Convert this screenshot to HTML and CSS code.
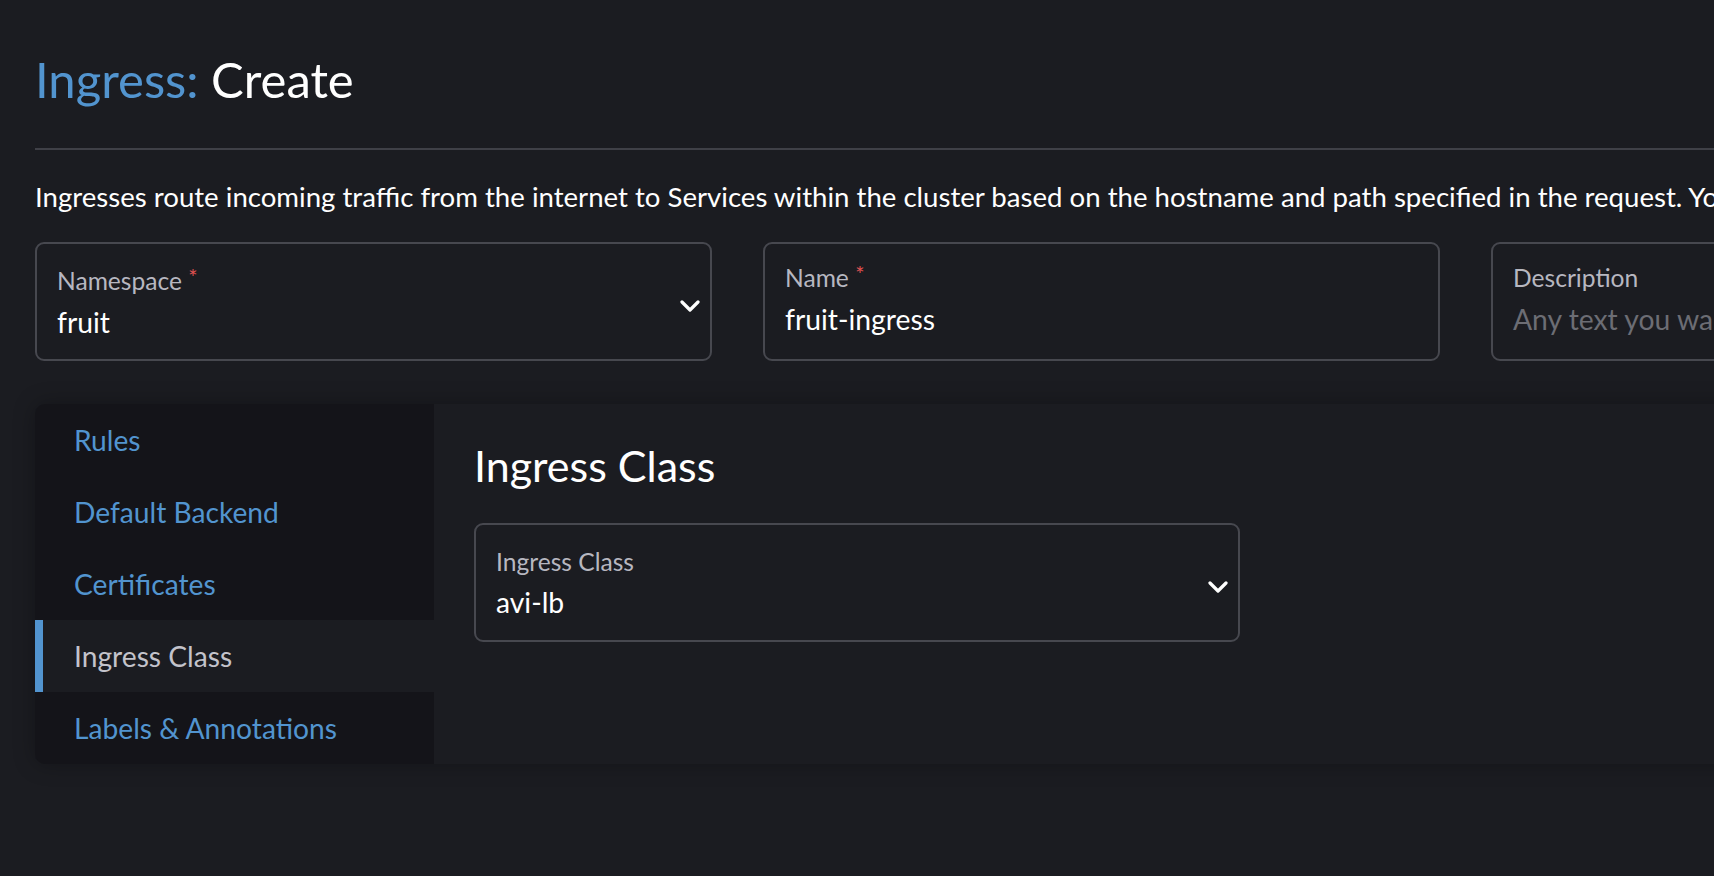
FILE: index.html
```html
<!DOCTYPE html>
<html lang="en">
<head>
<meta charset="utf-8">
<title>Ingress: Create</title>
<link rel="stylesheet" href="styles.css">
</head>
<body>
<div class="page">
  <header class="masthead">
    <h1 class="title"><span class="crumb">Ingress:</span> Create</h1>
  </header>
  <p class="intro">Ingresses route incoming traffic from the internet to Services within the cluster based on the hostname and path specified in the request. You can set up rules for host and path routing.</p>

  <div class="name-row">
    <div class="field field-select">
      <div class="field-text">
        <label class="field-label">Namespace <span class="req">*</span></label>
        <div class="field-value">fruit</div>
      </div>
      <svg class="chev" viewBox="0 0 20 12" aria-hidden="true"><path d="M2 2 L10 10 L18 2" fill="none" stroke="#ffffff" stroke-width="3.2" stroke-linecap="round" stroke-linejoin="round"/></svg>
    </div>
    <div class="field">
      <div class="field-text">
        <label class="field-label">Name <span class="req">*</span></label>
        <div class="field-value">fruit-ingress</div>
      </div>
    </div>
    <div class="field">
      <div class="field-text">
        <label class="field-label">Description</label>
        <div class="field-value placeholder">Any text you want that describes this resource</div>
      </div>
    </div>
  </div>

  <div class="tabbed">
    <ul class="tabs">
      <li class="tab">Rules</li>
      <li class="tab">Default Backend</li>
      <li class="tab">Certificates</li>
      <li class="tab active">Ingress Class</li>
      <li class="tab">Labels &amp; Annotations</li>
    </ul>
    <section class="tab-body">
      <h2 class="section-title">Ingress Class</h2>
      <div class="field field-select wide">
        <div class="field-text">
          <label class="field-label">Ingress Class</label>
          <div class="field-value">avi-lb</div>
        </div>
        <svg class="chev" viewBox="0 0 20 12" aria-hidden="true"><path d="M2 2 L10 10 L18 2" fill="none" stroke="#ffffff" stroke-width="3.2" stroke-linecap="round" stroke-linejoin="round"/></svg>
      </div>
    </section>
  </div>
</div>
</body>
</html>
```

FILE: styles.css
```css
html, body {
  margin: 0;
  padding: 0;
  background: #1b1c21;
  overflow: hidden;
}

body {
  font-family: Lato, "Open Sans", "Liberation Sans", sans-serif;
  color: #ffffff;
  width: 1714px;
  height: 876px;
}

.page {
  width: 2400px;
  padding: 50px 0 0 35px;
  box-sizing: border-box;
}

.masthead {
  width: 2200px;
  border-bottom: 2px solid #3f4047;
  padding-bottom: 39px;
}

.title {
  margin: 0;
  font-size: 49px;
  font-weight: 400;
  line-height: 1.2;
  color: #ffffff;
}

.crumb {
  color: #5294cf;
}

.intro {
  margin: 30px 0 0 0;
  font-size: 27.6px;
  line-height: 34.4px;
  white-space: nowrap;
  color: #ffffff;
}

.name-row {
  display: flex;
  gap: 51px;
  margin-top: 28px;
}

.field {
  width: 677px;
  height: 119px;
  box-sizing: border-box;
  border: 2px solid #47484f;
  border-radius: 9px;
  padding: 19px 10px 0 20px;
  display: flex;
  align-items: flex-start;
  justify-content: space-between;
  background: #1b1c21;
}

.field-select {
  padding-top: 22px;
}

.field-text {
  display: flex;
  flex-direction: column;
}

.field-label {
  font-size: 24.6px;
  line-height: 29.5px;
  color: #b7b7c0;
  white-space: nowrap;
}

.req {
  color: #e05252;
  font-size: 22px;
  vertical-align: top;
  position: relative;
  top: -4px;
}

.field-value {
  margin-top: 9px;
  font-size: 28.3px;
  line-height: 34.4px;
  color: #ffffff;
  white-space: nowrap;
}

.placeholder {
  color: #6c6d74;
}

.chev {
  width: 20px;
  height: 12px;
  margin-top: 34px;
  flex: none;
}

.tabbed {
  margin-top: 43px;
  display: flex;
  height: 360px;
  border-radius: 10px 0 0 10px;
  box-shadow: 0 0 22px rgba(0, 0, 0, 0.28);
  background: #1b1c21;
  width: 2200px;
}

.tabs {
  list-style: none;
  margin: 0;
  padding: 0;
  width: 399px;
  flex: none;
  background: #141419;
  border-radius: 10px 0 0 10px;
  overflow: hidden;
  display: flex;
  flex-direction: column;
}

.tab {
  height: 72px;
  display: flex;
  align-items: center;
  padding-left: 39px;
  font-size: 28.2px;
  color: #5294cf;
  white-space: nowrap;
  box-sizing: border-box;
}

.tab.active {
  background: #1b1c21;
  color: #c3c3cb;
  border-left: 8px solid #5294cf;
  padding-left: 31px;
}

.tab-body {
  flex: 1;
  padding: 36px 0 0 40px;
  background: #1b1c21;
}

.section-title {
  margin: 0;
  font-size: 43px;
  font-weight: 400;
  line-height: 51.6px;
  color: #ffffff;
}

.wide {
  width: 766px;
  margin-top: 31px;
}
```
